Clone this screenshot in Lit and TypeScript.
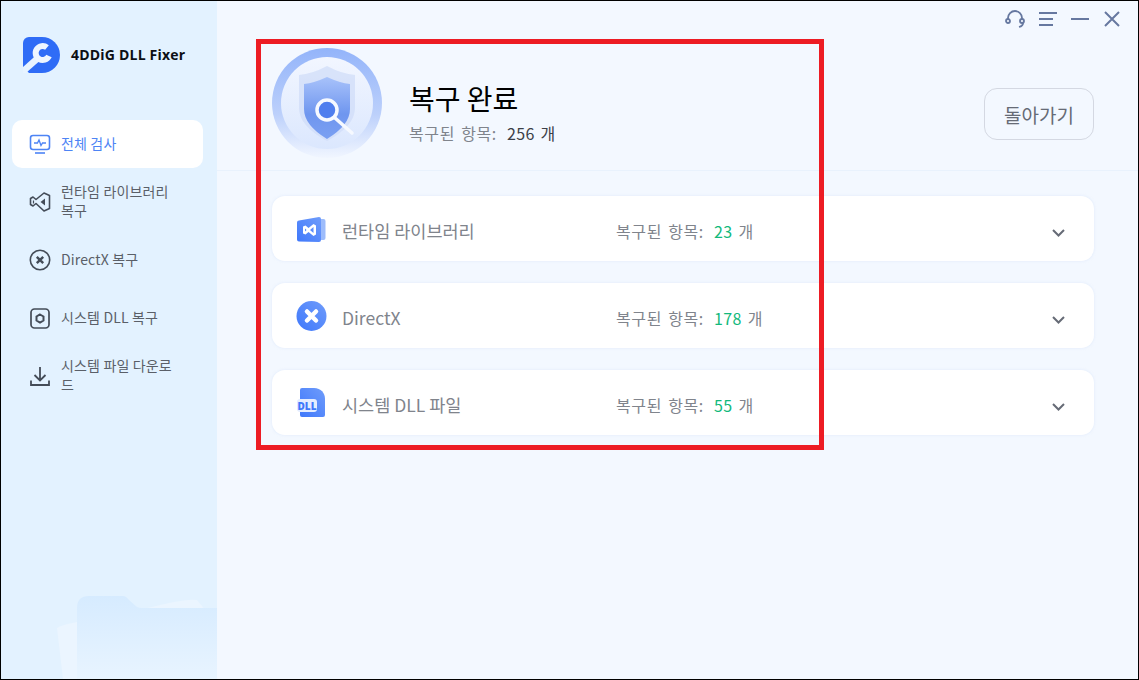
import { LitElement, html, css, svg } from 'lit';
import { customElement } from 'lit/decorators.js';

const navIcons = {
  scan: svg`<rect x="1.500" y="2.500" width="19" height="14" rx="2.500" fill="none" stroke="#4d84f5" stroke-width="1.600"/><path d="M5 10h3.500l1.500-3 2 5.500 1.500-2.500H17" fill="none" stroke="#4d84f5" stroke-width="1.300"/><path d="M6 20h10" stroke="#4d84f5" stroke-width="1.600"/>`,
  runtime: svg`<path d="M15 2l5.500 2.500v13L15 20l-8-7.500-3 2.500-2.500-1.500v-6L4 6l3 2.500z" fill="none" stroke="#444c58" stroke-width="1.600" stroke-linejoin="round"/><path d="M16 7.500 11.500 11l4.500 3.500z" fill="#444c58"/><path d="M4.500 9.500v3" stroke="#444c58" stroke-width="1.200"/>`,
  directx: svg`<circle cx="11" cy="11" r="9.700" fill="none" stroke="#444c58" stroke-width="1.600"/><path d="M7.800 7.800l6.400 6.400M14.200 7.800l-6.400 6.400" stroke="#444c58" stroke-width="2.400"/>`,
  dll: svg`<rect x="2" y="2" width="18" height="19" rx="3.500" fill="none" stroke="#444c58" stroke-width="1.700"/><path d="M11 7.500l3.500 2v4l-3.500 2-3.500-2v-4z" fill="none" stroke="#444c58" stroke-width="2"/>`,
  download: svg`<path d="M11 2v13M5.500 10l5.500 5.500 5.500-5.500M2 15.500V20h18v-4.500" fill="none" stroke="#444c58" stroke-width="1.800"/>`,
};

const nav = [
  { label: '전체 검사', icon: navIcons.scan, active: true },
  { label: '런타임 라이브러리 복구', icon: navIcons.runtime },
  { label: 'DirectX 복구', icon: navIcons.directx },
  { label: '시스템 DLL 복구', icon: navIcons.dll },
  { label: '시스템 파일 다운로드', icon: navIcons.download },
];

const grad = svg`<defs><linearGradient id="blue" x1="0" y1="1" x2="1" y2="0"><stop offset="0" stop-color="#3f78fb"/><stop offset="1" stop-color="#6f9cfb"/></linearGradient></defs>`;

const rows = [
  {
    name: '런타임 라이브러리',
    count: 23,
    icon: svg`${grad}<g transform="translate(0 2)"><path d="M24 3h2.500a2 2 0 0 1 2 2v17a2 2 0 0 1-2 2H24z" fill="#9dbcfb"/><path d="M0 6.500a2 2 0 0 1 2-2L22 1a2 2 0 0 1 2 2v21a2 2 0 0 1-2 2L2 25.500a2 2 0 0 1-2-2z" fill="url(#blue)"/><path d="M6 10.500l2.500-1 3 2.500 5-4 2.500 1.500v9L16.500 20l-5-4-3 2.500-2.500-1zM16.500 11l-3.500 3 3.500 3zM8 12.500v3l1.500-1.500z" fill="#fff" fill-rule="evenodd"/></g>`,
  },
  {
    name: 'DirectX',
    count: 178,
    icon: svg`${grad}<circle cx="14.500" cy="15" r="15" fill="url(#blue)"/><path d="M10 10.500l9 9M19 10.500l-9 9" stroke="#fff" stroke-width="4.500" stroke-linecap="round"/>`,
  },
  {
    name: '시스템 DLL 파일',
    count: 55,
    icon: svg`${grad}<path d="M3 2a2 2 0 0 1 2-2h12c7 0 11 5 11 11v16a2 2 0 0 1-2 2H5a2 2 0 0 1-2-2z" fill="url(#blue)"/><rect x="0" y="11" width="20" height="13" rx="3" fill="#e4edff"/><text x="10" y="21.500" text-anchor="middle" font-family="Open Sans, sans-serif" font-size="10" font-weight="800" fill="#3f78fb">DLL</text>`,
  },
];

@customElement('app-root')
export class AppRoot extends LitElement {
  static styles = css`
    :host {
      display: flex;
      position: relative;
      box-sizing: border-box;
      width: 1139px;
      height: 680px;
      overflow: hidden;
      border: 1px solid #000;
      background: #f3f8ff;
      font-family: 'Noto Sans CJK KR', 'Open Sans', sans-serif;
      color: #6c7078;
    }

    .sidebar {
      position: relative;
      flex: none;
      width: 216px;
      background: #e3f2ff;
      overflow: hidden;
    }

    .logo {
      display: flex;
      align-items: center;
      gap: 10px;
      height: 37px;
      margin: 35px 0 47px 22px;
      font: 700 14px 'Open Sans', sans-serif;
      letter-spacing: 0.2px;
      color: #0c0f14;
    }

    .nav {
      position: relative;
      display: flex;
      flex-direction: column;
      gap: 10px;
      margin: 0 14px 0 11px;
    }

    .nav-item {
      display: flex;
      align-items: center;
      gap: 10px;
      height: 48px;
      padding: 0 28px 0 17px;
      border-radius: 10px;
      font-size: 14px;
      letter-spacing: 0.15px;
      line-height: 19px;
      color: #5a5f68;
    }

    .nav-item span {
      margin-top: -2px;
    }

    .nav-item.active {
      background: #fff;
      color: #4d84f5;
    }

    .nav-item svg {
      flex: none;
      width: 22px;
      height: 22px;
    }

    .folder {
      position: absolute;
      left: 56px;
      bottom: 0;
      width: 160px;
      height: 83px;
    }

    .main {
      flex: 1;
      display: flex;
      flex-direction: column;
      min-width: 0;
    }

    .controls {
      display: flex;
      justify-content: flex-end;
      align-items: center;
      gap: 14px;
      height: 36px;
      padding-right: 18px;
    }

    .controls svg {
      display: block;
    }

    .controls .close {
      margin-left: 1px;
    }

    .summary {
      display: flex;
      align-items: center;
      height: 133px;
      padding: 0 44px 0 55px;
      border-bottom: 1px solid #e9f2fd;
    }

    .badge {
      flex: none;
      width: 110px;
      height: 110px;
      margin-right: 27px;
      margin-top: -1px;
    }

    .summary-text {
      flex: 1;
      margin-top: 17px;
    }

    h1 {
      margin: 0;
      font-size: 28px;
      font-weight: 400;
      line-height: 36px;
      color: #000;
    }

    .total {
      margin-top: 6px;
      font-size: 16px;
      letter-spacing: 0.6px;
      word-spacing: 2px;
      line-height: 22px;
      color: #80848c;
    }

    .total b {
      margin-left: 4px;
      font-weight: 400;
      letter-spacing: 0.3px;
      color: #3c4048;
    }

    button {
      width: 110px;
      height: 52px;
      margin-top: 21px;
      border: 1px solid #d4d8e2;
      border-radius: 13px;
      background: transparent;
      font: 400 19px 'Noto Sans CJK KR', sans-serif;
      color: #666b76;
    }

    .list {
      display: flex;
      flex-direction: column;
      gap: 22px;
      padding: 25px 44px 0 55px;
    }

    .row {
      display: flex;
      align-items: center;
      height: 65px;
      padding: 0 29px 0 24px;
      border-radius: 13px;
      background: #fff;
      box-shadow: 0 0 3px rgba(190, 210, 240, 0.35);
    }

    .row-icon {
      flex: none;
      width: 32px;
      height: 32px;
      margin-right: 14px;
    }

    .row-name {
      width: 274px;
      padding-top: 4px;
      font-size: 17.500px;
      color: #80848c;
    }

    .row-count {
      flex: 1;
      padding-top: 4px;
      font-size: 16px;
      letter-spacing: 0.6px;
      word-spacing: 2px;
      color: #80848c;
    }

    .row-count b {
      margin-left: 4px;
      font-weight: 400;
      letter-spacing: 0.3px;
      color: #12b97c;
    }

    .chevron {
      width: 13px;
      height: 8px;
      margin-top: 9px;
    }

    .marker {
      position: absolute;
      left: 255px;
      top: 38px;
      width: 568px;
      height: 411px;
      box-sizing: border-box;
      border: 5px solid #ed1c24;
      pointer-events: none;
    }
  `;

  render() {
    return html`
      <aside class="sidebar">
        <svg class="folder" viewBox="0 0 160 83">
          <defs>
            <linearGradient id="fold" x1="0" y1="0" x2="0" y2="1">
              <stop offset="0" stop-color="#d6ebff" />
              <stop offset="1" stop-color="#e8f4ff" />
            </linearGradient>
          </defs>
          <path d="M0 32q4-3 20-6V83H6z" fill="#ebf5ff" />
          <path d="M90 12q40-10 50-8l10 12z" fill="#ebf5ff" />
          <path d="M20 12q0-12 12-12h34q3 0 6 4l8 7q2 1 5 1h75v71H20z" fill="url(#fold)" />
        </svg>
        <div class="logo">
          <svg width="38" height="36" viewBox="0 0 38 36">
            <path d="M6 0h13a18 18 0 0 1 0 36H6l-6-6V6a6 6 0 0 1 6-6z" fill="#2f6cf6" />
            <path d="M-2 36 15 21" stroke="#e8f4ff" stroke-width="6.500" />
            <path d="M24 10.500A7 7 0 1 0 26 19" fill="none" stroke="#eef6ff" stroke-width="6" />
          </svg>
          4DDiG DLL Fixer
        </div>
        <nav class="nav">
          ${nav.map(
            (item) => html`
              <div class="nav-item ${item.active ? 'active' : ''}">
                <svg viewBox="0 0 22 22">${item.icon}</svg>
                <span>${item.label}</span>
              </div>
            `
          )}
        </nav>
      </aside>
      <main class="main">
        <div class="controls">
          <svg width="20" height="18" viewBox="0 0 20 18" fill="none" stroke="#6678a0" stroke-width="1.800">
            <path d="M3 9V8a7 7 0 0 1 14 0v1" />
            <circle cx="3" cy="11" r="2" />
            <circle cx="17" cy="11" r="2" />
            <path d="M18 13q0 3-4 4" />
          </svg>
          <svg width="18" height="14" viewBox="0 0 18 14" stroke="#6678a0" stroke-width="2">
            <path d="M0 1h18M0 7h14M0 13h14" />
          </svg>
          <svg width="18" height="14" viewBox="0 0 18 14" stroke="#6678a0" stroke-width="2">
            <path d="M0 7h18" />
          </svg>
          <svg class="close" width="16" height="16" viewBox="0 0 16 16" stroke="#6678a0" stroke-width="2">
            <path d="M1 1l14 14M15 1 1 15" />
          </svg>
        </div>
        <section class="summary">
          <svg class="badge" viewBox="0 0 110 110">
            <defs>
              <linearGradient id="ring" x1="0" y1="0" x2="0" y2="1">
                <stop offset="0" stop-color="#93b4fa" />
                <stop offset="0.6" stop-color="#bcd0fb" />
                <stop offset="1" stop-color="#f1f6ff" />
              </linearGradient>
              <linearGradient id="disc" x1="0" y1="0" x2="0" y2="1">
                <stop offset="0" stop-color="#f2f6ff" />
                <stop offset="1" stop-color="#dbe7fe" />
              </linearGradient>
              <linearGradient id="shield" x1="0" y1="0" x2="0" y2="1">
                <stop offset="0" stop-color="#a8c2fa" />
                <stop offset="0.6" stop-color="#6f96ef" />
                <stop offset="1" stop-color="#7ba0f2" />
              </linearGradient>
            </defs>
            <circle cx="55" cy="55" r="55" fill="url(#ring)" />
            <circle cx="55" cy="55" r="46" fill="url(#disc)" />
            <path d="M55 18q15 8 28 9v33q0 18-28 33-28-15-28-33V27q13-1 28-9z" fill="#cfdcf8" opacity="0.7" />
            <path d="M55 29q13 6 23 7v25q0 16-23 30-23-14-23-30V36q10-1 23-7z" fill="url(#shield)" />
            <circle cx="55" cy="62" r="10" fill="#4f7eee" stroke="#f6f9ff" stroke-width="3.500" />
            <path d="M63 70l17 15" stroke="#f6f9ff" stroke-width="3.500" stroke-linecap="round" />
          </svg>
          <div class="summary-text">
            <h1>복구 완료</h1>
            <div class="total">복구된 항목: <b>256 개</b></div>
          </div>
          <button>돌아가기</button>
        </section>
        <section class="list">
          ${rows.map(
            (row) => html`
              <div class="row">
                <svg class="row-icon" viewBox="-1 -1 32 32">${row.icon}</svg>
                <div class="row-name">${row.name}</div>
                <div class="row-count">복구된 항목: <b>${row.count}</b> 개</div>
                <svg class="chevron" viewBox="0 0 13 8" fill="none" stroke="#666b76" stroke-width="2">
                  <path d="M1 1l5.500 5.500L12 1" />
                </svg>
              </div>
            `
          )}
        </section>
      </main>
      <div class="marker"></div>
    `;
  }
}

declare global {
  interface HTMLElementTagNameMap {
    'app-root': AppRoot;
  }
}
